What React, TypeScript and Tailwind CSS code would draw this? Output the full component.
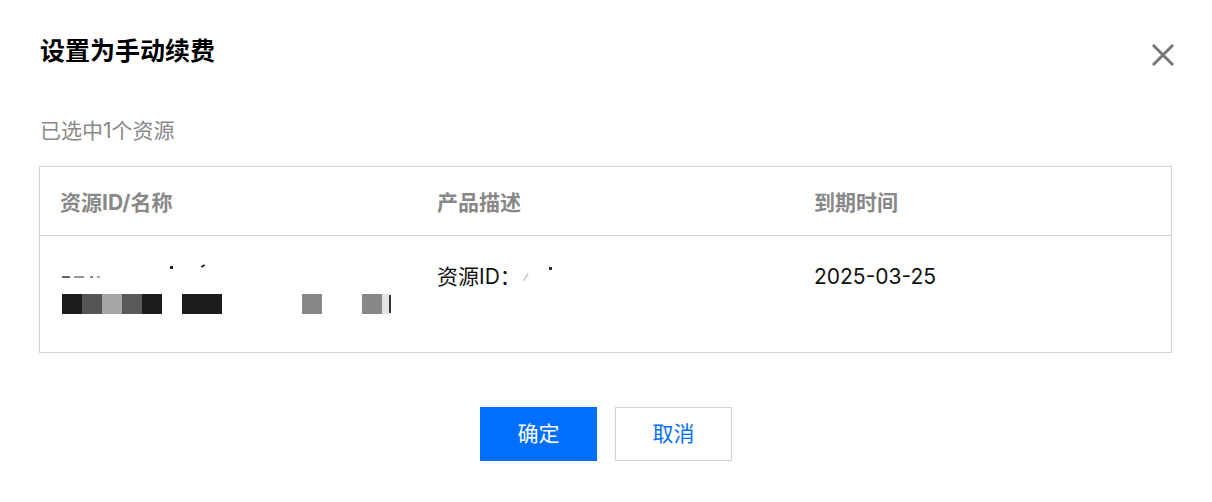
const font = { fontFamily: '"Inter", "Noto Sans CJK SC", sans-serif' };

const blocks = [
    { w: "w-[20px]", c: "bg-[#1c1c1c]", ml: "ml-0" },
    { w: "w-[20px]", c: "bg-[#555555]", ml: "ml-0" },
    { w: "w-[20px]", c: "bg-[#a6a6a6]", ml: "ml-0" },
    { w: "w-[20px]", c: "bg-[#5a5a5a]", ml: "ml-0" },
    { w: "w-[20px]", c: "bg-[#1c1c1c]", ml: "ml-0" },
    { w: "w-[40px]", c: "bg-[#1c1c1c]", ml: "ml-[20px]" },
    { w: "w-[20px]", c: "bg-[#888888]", ml: "ml-[80px]" },
    { w: "w-[20px]", c: "bg-[#888888]", ml: "ml-[40px]" },
    { w: "w-[7px]", c: "bg-[#e5e5e5]", ml: "ml-0" },
];

const CloseIcon = () => (
    <svg width="22" height="22" viewBox="0 0 22 22" className="mt-[6px] -mr-[2px]">
        <path d="M2 2L20 20M20 2L2 20" stroke="#777777" strokeWidth="3" strokeLinecap="square" />
    </svg>
);

const App = () => {
    return (
        <div className="w-[1212px] h-[502px] bg-white pt-[36px] pl-[39px] pr-[40px]" style={font}>
            <div className="flex justify-between items-center h-[32px]">
                <h1 className="text-[25px] font-bold text-black pl-[1px]">设置为手动续费</h1>
                <CloseIcon />
            </div>

            <p className="mt-[49px] text-[21px] leading-[28px] text-[#888888] pl-[1px]">已选中1个资源</p>

            <div className="mt-[21px] border border-[#cfd5de]">
                <div className="grid grid-cols-3 h-[69px] items-center border-b border-[#cfd5de] text-[21px] font-bold text-[#888888]">
                    <div className="pl-[20px] pt-[3px]">资源ID/名称</div>
                    <div className="pl-[20px] pt-[3px]">产品描述</div>
                    <div className="pl-[20px] pt-[3px]">到期时间</div>
                </div>
                <div className="grid grid-cols-3 h-[116px] text-[21px] leading-[28px] text-[#111111] pt-[27px]">
                    <div className="pl-[22px]">
                        <div className="flex items-center h-[28px]">
                            <span className="w-[8px] h-[2px] bg-[#666666]" />
                            <span className="ml-[4px] w-[10px] h-[2px] bg-[#999999]" />
                            <span className="ml-[6px] w-[3px] h-[2px] bg-[#888888]" />
                            <span className="ml-[4px] w-[3px] h-[2px] bg-[#aaaaaa]" />
                            <span className="ml-[70px] w-[3px] h-[3px] -mt-[20px] bg-[#222222]" />
                            <span className="ml-[28px] w-[4px] h-[2px] -mt-[22px] bg-[#222222] rotate-[-30deg]" />
                        </div>
                        <div className="flex items-center h-[20px] mt-[3px]">
                            {blocks.map((b, i) => (
                                <span key={i} className={`${b.w} h-[20px] ${b.c} ${b.ml}`} />
                            ))}
                            <span className="w-[2px] h-[18px] bg-[#333333]" />
                        </div>
                    </div>
                    <div className="pl-[20px] flex items-start">
                        <span>资源ID：</span>
                        <span className="ml-[4px] mt-[10px] w-[2px] h-[8px] bg-[#cccccc] rotate-[30deg]" />
                        <span className="ml-[22px] mt-[4px] w-[3px] h-[3px] bg-[#333333]" />
                    </div>
                    <div className="pl-[20px]">2025-03-25</div>
                </div>
            </div>

            <div className="mt-[54px] flex justify-center gap-[18px] pl-[1px]">
                <button className="w-[117px] h-[54px] bg-[#006eff] text-white text-[21px]">确定</button>
                <button className="w-[117px] h-[54px] bg-white border border-[#cfd5de] text-[#006eff] text-[21px]">取消</button>
            </div>
        </div>
    );
};

export default App;
